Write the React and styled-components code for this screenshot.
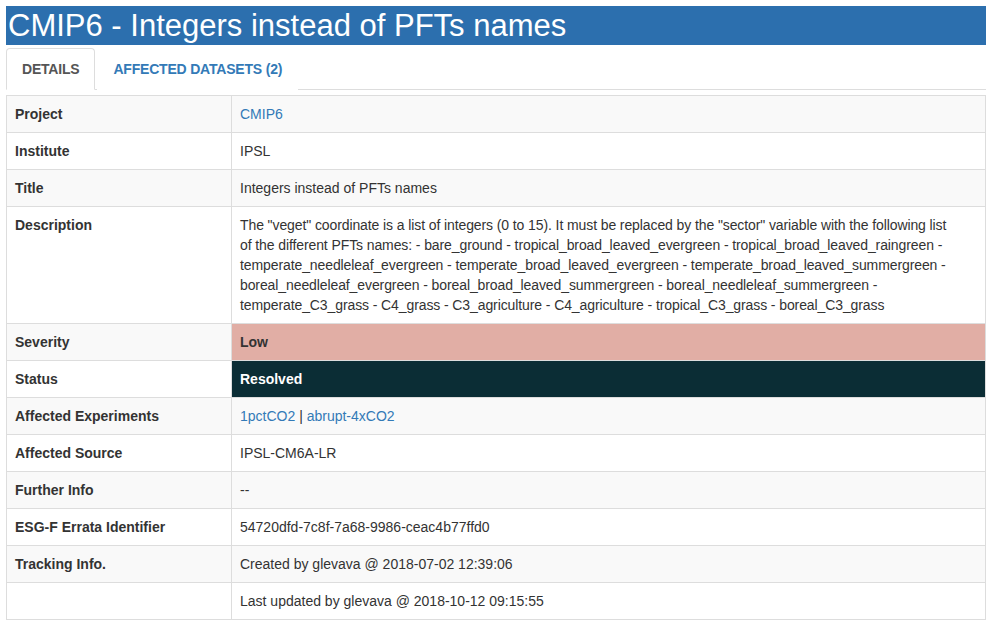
import React from "react";
import styled, { createGlobalStyle } from "styled-components";

const Global = createGlobalStyle`
  html, body { margin: 0; padding: 0; background: #fff; }
  body {
    font-family: "Liberation Sans", Arial, Helvetica, sans-serif;
    font-size: 14px;
    line-height: 20px;
    color: #333;
  }
  * { box-sizing: border-box; }
`;

const Page = styled.div`
  padding: 6px 6px 0 6px;
  width: 992px;
`;

const TitleBar = styled.h1`
  margin: 0 0 3px 0;
  background: #2c6fae;
  color: #fff;
  font-family: "Liberation Sans", Arial, sans-serif;
  font-weight: 400;
  font-size: 31px;
  line-height: 39px;
  height: 39px;
  padding: 0 0 0 2px;
  white-space: nowrap;
`;

const TabNav = styled.ul`
  display: flex;
  list-style: none;
  margin: 0;
  padding: 0;
  border-bottom: 1px solid #ddd;
`;

const TabItem = styled.li`
  margin-bottom: -1px;
`;

const TabLink = styled.a`
  display: block;
  margin-right: 2px;
  padding: 10px 15px;
  line-height: 20px;
  font-size: 14px;
  font-weight: 700;
  letter-spacing: -0.2px;
  text-transform: uppercase;
  text-decoration: none;
  border: 1px solid ${(p) => (p.$active ? "#ddd" : "transparent")};
  border-bottom-color: ${(p) => (p.$active ? "#fff" : "transparent")};
  border-radius: 4px 4px 0 0;
  background: #fff;
  color: ${(p) => (p.$active ? "#555" : "#337ab7")};
  cursor: pointer;
`;

const Table = styled.table`
  margin-top: 5px;
  width: 980px;
  border-collapse: collapse;
  border-spacing: 0;
  border: 1px solid #ddd;
  table-layout: fixed;
`;

const Row = styled.tr`
  background: ${(p) => (p.$striped ? "#f9f9f9" : "#fff")};
`;

const LabelCell = styled.td`
  width: 225px;
  padding: 8px;
  border: 1px solid #ddd;
  vertical-align: top;
  font-weight: 700;
  line-height: 20px;
`;

const ValueCell = styled.td`
  padding: 8px;
  border: 1px solid #ddd;
  vertical-align: top;
  line-height: 20px;
  background: ${(p) =>
    p.$tone === "low" ? "#e1aea5" : p.$tone === "resolved" ? "#0b2d35" : "transparent"};
  color: ${(p) => (p.$tone === "resolved" ? "#fff" : "#333")};
  font-weight: ${(p) => (p.$tone ? 700 : 400)};
`;

const DescLine = styled.span`
  display: block;
  white-space: nowrap;
  letter-spacing: -0.1px;
`;

const Link = styled.a`
  color: #337ab7;
  text-decoration: none;
`;

const descriptionLines = [
  'The "veget" coordinate is a list of integers (0 to 15). It must be replaced by the "sector" variable with the following list',
  "of the different PFTs names: - bare_ground - tropical_broad_leaved_evergreen - tropical_broad_leaved_raingreen -",
  "temperate_needleleaf_evergreen - temperate_broad_leaved_evergreen - temperate_broad_leaved_summergreen -",
  "boreal_needleleaf_evergreen - boreal_broad_leaved_summergreen - boreal_needleleaf_summergreen -",
  "temperate_C3_grass - C4_grass - C3_agriculture - C4_agriculture - tropical_C3_grass - boreal_C3_grass",
];

const rows = [
  { label: "Project", value: <Link>CMIP6</Link> },
  { label: "Institute", value: "IPSL" },
  { label: "Title", value: "Integers instead of PFTs names" },
  {
    label: "Description",
    value: descriptionLines.map((l, i) => <DescLine key={i}>{l}</DescLine>),
  },
  { label: "Severity", value: "Low", tone: "low" },
  { label: "Status", value: "Resolved", tone: "resolved" },
  {
    label: "Affected Experiments",
    value: (
      <>
        <Link>1pctCO2</Link> | <Link>abrupt-4xCO2</Link>
      </>
    ),
  },
  { label: "Affected Source", value: "IPSL-CM6A-LR" },
  { label: "Further Info", value: "--" },
  { label: "ESG-F Errata Identifier", value: "54720dfd-7c8f-7a68-9986-ceac4b77ffd0" },
  { label: "Tracking Info.", value: "Created by glevava @ 2018-07-02 12:39:06" },
  { label: "", value: "Last updated by glevava @ 2018-10-12 09:15:55" },
];

export default function App() {
  return (
    <Page>
      <Global />
      <TitleBar>CMIP6 - Integers instead of PFTs names</TitleBar>
      <TabNav>
        <TabItem>
          <TabLink $active>Details</TabLink>
        </TabItem>
        <TabItem>
          <TabLink>Affected Datasets (2)</TabLink>
        </TabItem>
      </TabNav>
      <Table>
        <tbody>
          {rows.map((r, i) => (
            <Row key={i} $striped={i % 2 === 0}>
              <LabelCell>{r.label}</LabelCell>
              <ValueCell $tone={r.tone}>{r.value}</ValueCell>
            </Row>
          ))}
        </tbody>
      </Table>
    </Page>
  );
}
